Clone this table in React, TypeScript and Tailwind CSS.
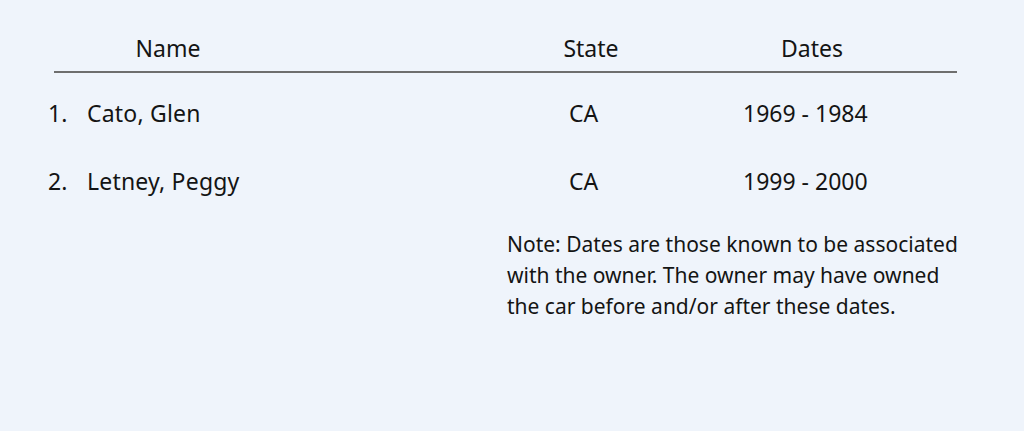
import React from "react";

export default function App() {
  const rows = [
    { n: "1.", name: "Cato, Glen", state: "CA", dates: "1969 - 1984" },
    { n: "2.", name: "Letney, Peggy", state: "CA", dates: "1999 - 2000" },
  ];
  return (
    <div
      className="w-[1024px] h-[431px] bg-[#eff4fb] text-[#141414] text-[23px] leading-[31px]"
      style={{ fontFamily: '"Noto Sans", "Open Sans", sans-serif' }}
    >
      <div className="pt-[32px] pl-[54px] w-[957px]">
        <div className="flex h-[32px] items-center">
          <div className="w-[228px] text-center">Name</div>
          <div className="w-[249px]" />
          <div className="w-[120px] text-center">State</div>
          <div className="w-[61px]" />
          <div className="w-[200px] text-center">Dates</div>
        </div>
        <div className="mt-[7px] h-[2px] bg-[#6e6e6e]" />
      </div>
      <div className="pl-[48px] pt-[25px] flex flex-col gap-[37px]">
        {rows.map((r) => (
          <div key={r.n} className="flex h-[31px] items-center">
            <div className="w-[39px]">{r.n}</div>
            <div className="w-[482px] tracking-[0.2px]">{r.name}</div>
            <div className="w-[174px]">{r.state}</div>
            <div>{r.dates}</div>
          </div>
        ))}
      </div>
      <div className="ml-[507px] mt-[32px] w-[460px] text-[21px]">
        Note: Dates are those known to be associated with the owner. The owner may have owned the car before and/or after these dates.
      </div>
    </div>
  );
}
